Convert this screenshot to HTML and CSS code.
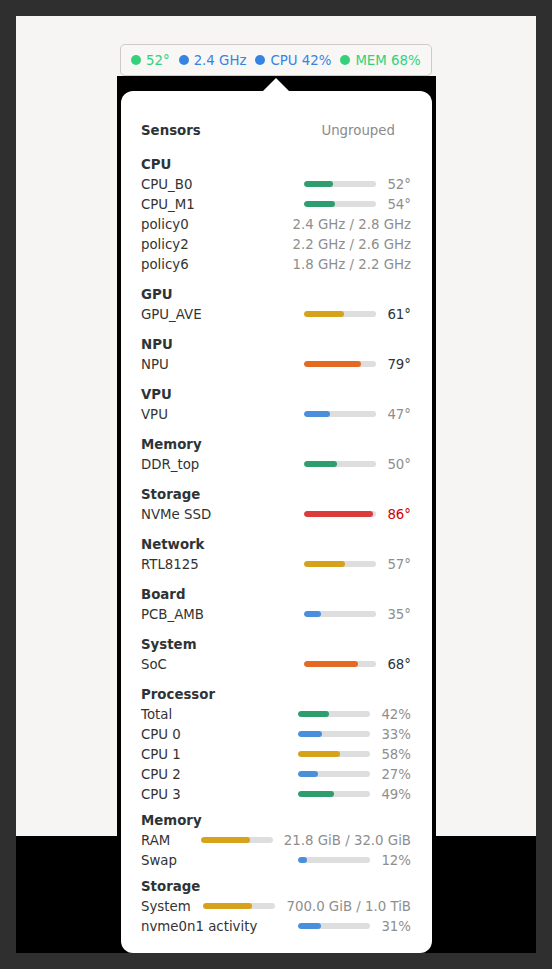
FILE: index.html
```html
<!DOCTYPE html>
<html lang="en">
<head>
    <meta charset="UTF-8">
    <meta name="viewport" content="width=device-width, initial-scale=1.0">
    <title>Sensors</title>
    <link rel="stylesheet" href="styles.css">
</head>
<body>
    <div class="screen">
        <div class="desktop">
            <div class="panel-button">
                <span class="chip green"><span class="dot"></span>52°</span>
                <span class="chip blue"><span class="dot"></span>2.4 GHz</span>
                <span class="chip blue"><span class="dot"></span>CPU 42%</span>
                <span class="chip green"><span class="dot"></span>MEM 68%</span>
            </div>
        </div>
        <div class="strip"></div>

        <div class="menu-frame">
            <div class="arrow"></div>
            <div class="popover">
                <div class="popover-header">
                    <span class="title">Sensors</span>
                    <span class="mode">Ungrouped</span>
                </div>

                <div class="sensors">
                    <div class="group">
                        <div class="group-title">CPU</div>
                        <div class="row"><span class="label">CPU_B0</span><span class="bar"><span class="fill green" style="width: 40%"></span></span><span class="value">52°</span></div>
                        <div class="row"><span class="label">CPU_M1</span><span class="bar"><span class="fill green" style="width: 43%"></span></span><span class="value">54°</span></div>
                        <div class="row"><span class="label">policy0</span><span class="value">2.4 GHz / 2.8 GHz</span></div>
                        <div class="row"><span class="label">policy2</span><span class="value">2.2 GHz / 2.6 GHz</span></div>
                        <div class="row"><span class="label">policy6</span><span class="value">1.8 GHz / 2.2 GHz</span></div>
                    </div>
                    <div class="group">
                        <div class="group-title">GPU</div>
                        <div class="row"><span class="label">GPU_AVE</span><span class="bar"><span class="fill yellow" style="width: 55%"></span></span><span class="value warm">61°</span></div>
                    </div>
                    <div class="group">
                        <div class="group-title">NPU</div>
                        <div class="row"><span class="label">NPU</span><span class="bar"><span class="fill orange" style="width: 79%"></span></span><span class="value warm">79°</span></div>
                    </div>
                    <div class="group">
                        <div class="group-title">VPU</div>
                        <div class="row"><span class="label">VPU</span><span class="bar"><span class="fill blue" style="width: 36%"></span></span><span class="value">47°</span></div>
                    </div>
                    <div class="group">
                        <div class="group-title">Memory</div>
                        <div class="row"><span class="label">DDR_top</span><span class="bar"><span class="fill green" style="width: 46%"></span></span><span class="value">50°</span></div>
                    </div>
                    <div class="group">
                        <div class="group-title">Storage</div>
                        <div class="row"><span class="label">NVMe SSD</span><span class="bar"><span class="fill red" style="width: 96%"></span></span><span class="value hot">86°</span></div>
                    </div>
                    <div class="group">
                        <div class="group-title">Network</div>
                        <div class="row"><span class="label">RTL8125</span><span class="bar"><span class="fill yellow" style="width: 57%"></span></span><span class="value">57°</span></div>
                    </div>
                    <div class="group">
                        <div class="group-title">Board</div>
                        <div class="row"><span class="label">PCB_AMB</span><span class="bar"><span class="fill blue" style="width: 23%"></span></span><span class="value">35°</span></div>
                    </div>
                    <div class="group">
                        <div class="group-title">System</div>
                        <div class="row"><span class="label">SoC</span><span class="bar"><span class="fill orange" style="width: 74%"></span></span><span class="value warm">68°</span></div>
                    </div>
                </div>

                <div class="usage">
                    <div class="group">
                        <div class="group-title">Processor</div>
                        <div class="row"><span class="label">Total</span><span class="bar"><span class="fill green" style="width: 42%"></span></span><span class="value">42%</span></div>
                        <div class="row"><span class="label">CPU 0</span><span class="bar"><span class="fill blue" style="width: 33%"></span></span><span class="value">33%</span></div>
                        <div class="row"><span class="label">CPU 1</span><span class="bar"><span class="fill yellow" style="width: 58%"></span></span><span class="value">58%</span></div>
                        <div class="row"><span class="label">CPU 2</span><span class="bar"><span class="fill blue" style="width: 27%"></span></span><span class="value">27%</span></div>
                        <div class="row"><span class="label">CPU 3</span><span class="bar"><span class="fill green" style="width: 49%"></span></span><span class="value">49%</span></div>
                    </div>
                    <div class="group">
                        <div class="group-title">Memory</div>
                        <div class="row"><span class="label">RAM</span><span class="bar"><span class="fill yellow" style="width: 68%"></span></span><span class="value">21.8 GiB / 32.0 GiB</span></div>
                        <div class="row"><span class="label">Swap</span><span class="bar"><span class="fill blue" style="width: 12%"></span></span><span class="value">12%</span></div>
                    </div>
                    <div class="group">
                        <div class="group-title">Storage</div>
                        <div class="row"><span class="label">System</span><span class="bar"><span class="fill yellow" style="width: 68%"></span></span><span class="value">700.0 GiB / 1.0 TiB</span></div>
                        <div class="row"><span class="label">nvme0n1 activity</span><span class="bar"><span class="fill blue" style="width: 31%"></span></span><span class="value">31%</span></div>
                    </div>
                </div>
            </div>
        </div>
    </div>
</body>
</html>
```

FILE: styles.css
```css
body {
    margin: 0;
    padding: 16px;
    background: #2f2f2f;
    font-family: "DejaVu Sans", Verdana, sans-serif;
    font-size: 13.33px;
    color: #2e3436;
}

.screen {
    position: relative;
    width: 520px;
    height: 937px;
    display: flex;
    flex-direction: column;
}

.desktop {
    flex: 0 0 820px;
    background: #f6f5f4;
    padding: 28px 0 0 104px;
    box-sizing: border-box;
}

.strip {
    flex: 1;
    background: #000;
}

.panel-button {
    display: inline-flex;
    align-items: center;
    gap: 9px;
    height: 32px;
    padding: 0 10px;
    box-sizing: border-box;
    background: #f8f7f6;
    border: 1px solid #cfcac5;
    border-radius: 5px;
}

.chip {
    display: flex;
    align-items: center;
    gap: 5px;
}

.chip .dot {
    width: 10px;
    height: 10px;
    border-radius: 50%;
    background: currentColor;
}

.chip.green {
    color: #33d17a;
}

.chip.blue {
    color: #3584e4;
}

/* popover with its shadow area */
.menu-frame {
    position: absolute;
    left: 101px;
    top: 60px;
    bottom: 0;
    width: 319px;
    padding: 15px 4px 0;
    box-sizing: border-box;
    background: #000;
}

.arrow {
    position: absolute;
    top: 2px;
    left: 146px;
    width: 0;
    height: 0;
    border-left: 13px solid transparent;
    border-right: 13px solid transparent;
    border-bottom: 13px solid #fff;
}

.popover {
    height: 100%;
    background: #fff;
    border-radius: 12px;
    padding: 27px 21px 0 20px;
    box-sizing: border-box;
}

.popover-header {
    display: flex;
    justify-content: space-between;
    align-items: center;
    height: 24px;
    margin-bottom: 12px;
}

.popover-header .title {
    font-weight: bold;
}

.popover-header .mode {
    color: #8b8b8b;
    padding-right: 16px;
}

.sensors .group + .group {
    margin-top: 10px;
}

.usage {
    margin-top: 10px;
}

.usage .group + .group {
    margin-top: 6px;
}

.group-title {
    font-weight: bold;
    line-height: 20px;
    padding-top: 1px;
    margin-bottom: -1px;
}

.row {
    display: flex;
    align-items: center;
    height: 20px;
    color: #333;
}

.row .label {
    flex: 1;
    white-space: nowrap;
}

.bar {
    width: 72px;
    height: 6px;
    margin-right: 11px;
    border-radius: 3px;
    background: #dedede;
    overflow: hidden;
}

.fill {
    display: block;
    height: 100%;
    border-radius: 3px;
}

.fill.green { background: #2e9e6e; }
.fill.yellow { background: #d6a21a; }
.fill.orange { background: #e26a22; }
.fill.blue { background: #4a8fdb; }
.fill.red { background: #dc3b3b; }

.value {
    color: #8e8e8e;
    white-space: nowrap;
}

.value.warm {
    color: #2e3436;
}

.value.hot {
    color: #d40000;
}
```
